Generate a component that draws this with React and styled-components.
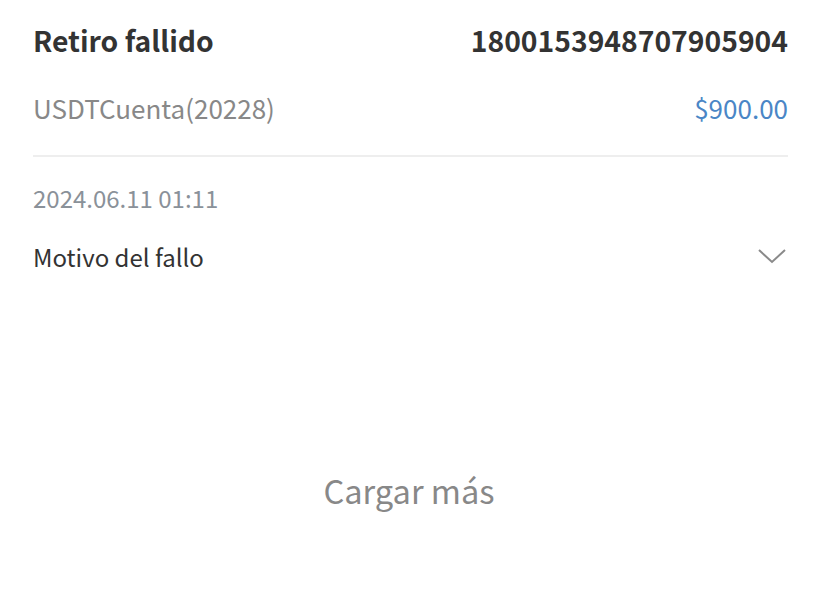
import styled, { createGlobalStyle } from "styled-components";

const GlobalStyle = createGlobalStyle`
  body {
    margin: 0;
    background: #fff;
    font-family: "Noto Sans CJK SC", "Noto Sans", sans-serif;
  }
`;

const Page = styled.div`
  width: 818px;
  height: 600px;
  background: #fff;
  display: flex;
  flex-direction: column;
`;

const Record = styled.div`
  padding: 0 30px 0 33px;
  display: flex;
  flex-direction: column;
`;

const Row = styled.div`
  display: flex;
  justify-content: space-between;
  align-items: center;
  height: ${(p) => p.h}px;
`;

const Title = styled.span`
  font-size: 28.3px;
  font-weight: 700;
  color: #333;
`;

const Sub = styled.span`
  font-size: ${(p) => p.size || 26}px;
  color: ${(p) => p.color || "#888"};
`;

const Divider = styled.div`
  height: 2px;
  margin-top: 19px;
  background: #eeeeee;
`;

const Reason = styled.span`
  font-size: 24px;
  color: #333;
`;

const LoadMore = styled.div`
  margin-top: 191px;
  text-align: center;
  font-size: 32.6px;
  color: #888;
`;

const Chevron = () => (
  <svg width="30" height="16" viewBox="0 0 30 16" fill="none" style={{ marginRight: 1 }}>
    <path d="M2 2 L15 14 L28 2" stroke="#8a8a8a" strokeWidth="2" />
  </svg>
);

export default function App() {
  return (
    <Page>
      <GlobalStyle />
      <Record>
        <Row h={78}>
          <Title>Retiro fallido</Title>
          <Title>1800153948707905904</Title>
        </Row>
        <Row h={58}>
          <Sub>USDTCuenta(20228)</Sub>
          <Sub color="#4a86c6">$900.00</Sub>
        </Row>
        <Divider />
        <Row h={80}>
          <Sub size={24} color="#8a9199">2024.06.11 01:11</Sub>
        </Row>
        <Row h={38}>
          <Reason>Motivo del fallo</Reason>
          <Chevron />
        </Row>
      </Record>
      <LoadMore>Cargar más</LoadMore>
    </Page>
  );
}
